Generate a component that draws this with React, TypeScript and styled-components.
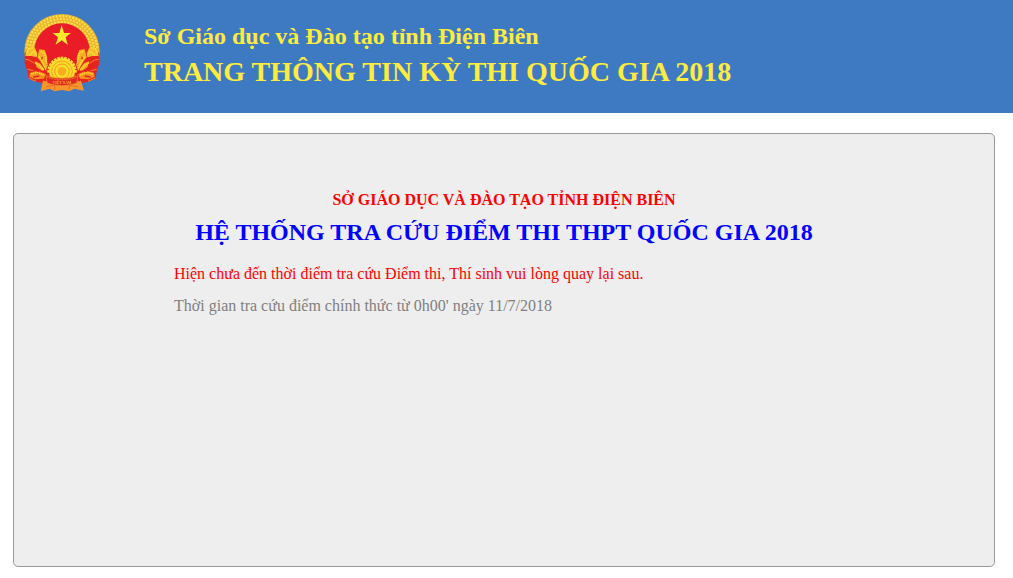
import React from "react";
import styled, { createGlobalStyle } from "styled-components";

const GlobalStyle = createGlobalStyle`
  body {
    margin: 0;
    background: #ffffff;
    font-family: "Liberation Serif", "Times New Roman", Times, serif;
  }
`;

const Header = styled.header`
  display: flex;
  align-items: flex-start;
  gap: 44px;
  min-height: 113px;
  box-sizing: border-box;
  padding: 14px 24px;
  background: #3e7ac2;
  color: #ffeb3b;
`;

const EmblemSvg = styled.svg`
  flex: none;
  width: 76px;
  height: 79px;
`;

const Titles = styled.div`
  padding-top: 4px;
`;

const Department = styled.p`
  margin: 0;
  font-size: 24px;
  line-height: 36px;
  font-weight: bold;
`;

const SiteTitle = styled.h1`
  margin: 0;
  font-size: 28px;
  line-height: 36px;
  font-weight: bold;
`;

const Panel = styled.main`
  box-sizing: border-box;
  min-height: calc(100vh - 144px);
  margin: 20px 18px 11px 13px;
  padding: 50px 20px;
  border: 1px solid #999999;
  border-radius: 5px;
  background: #eeeeee;
`;

const Content = styled.section`
  max-width: 660px;
  margin: 0 auto;
`;

const Agency = styled.p`
  margin: 0;
  text-align: center;
  color: #ff0000;
  font-size: 16px;
  line-height: 32px;
  font-weight: bold;
`;

const SystemTitle = styled.h2`
  margin: 0 0 10px;
  text-align: center;
  color: #0000ff;
  font-size: 24px;
  line-height: 32px;
  font-weight: bold;
`;

const Message = styled.p<{ $color: string }>`
  margin: 0;
  color: ${({ $color }) => $color};
  font-size: 16px;
  line-height: 32px;
`;

const teeth = Array.from({ length: 13 }, (_, i) => -180 + i * 15);

function Sheaf() {
  return (
    <g>
      <path d="M20 138 L28 120 L50 116 L82 124 L92 160 L92 206 L80 226 L56 222 L32 212 L28 190 L20 166 Z" fill="#e8241f" />
      <path d="M22 144 L26 120 L48 114 L58 136 L56 148 L40 144 Z" fill="#f3bd2c" />
      <path d="M64 124 L80 126 L88 148 L86 170 L96 188 L90 196 L78 178 L66 158 L58 148 Z" fill="#f5ae24" />
      <path d="M50 160 L66 166 L80 184 L72 188 L56 178 Z" fill="#f6a823" />
      <path d="M36 194 L58 188 L84 198 L78 212 L52 214 L34 206 Z" fill="#f3901f" />
      <g fill="none" stroke="#ffe733" strokeWidth="4" strokeDasharray="4 2">
        <path d="M26 136 L32 122 L48 119 M34 142 L48 130 L56 142" />
        <path d="M68 130 L80 136 L84 156 L92 186 M64 146 L74 162 L86 190" />
        <path d="M52 164 L64 172 L78 188 M40 198 L58 193 L80 202" />
      </g>
      <g fill="none" stroke="#e02320" strokeWidth="4">
        <path d="M22 152 L44 156 M24 164 L46 176 L62 192 M72 146 L72 154 M46 207 L64 204" />
      </g>
      <path d="M22 154 L34 156 L50 166 M28 184 L46 188 M32 210 L54 220" fill="none" stroke="#f28a24" strokeWidth="3" />
    </g>
  );
}

function Emblem() {
  return (
    <EmblemSvg viewBox="18 18 228 237" preserveAspectRatio="none" role="img" aria-label="Quốc huy Việt Nam">
      <ellipse cx="132" cy="130" rx="113" ry="112" fill="#e9b12d" />
      <g fill="none" stroke="#fbe04a">
        <circle cx="132" cy="130" r="106" strokeWidth="7" strokeDasharray="6 4" />
        <circle cx="132" cy="130" r="97" strokeWidth="6" strokeDasharray="6 4" />
        <circle cx="132" cy="130" r="88" strokeWidth="6" strokeDasharray="7 3" />
      </g>
      <ellipse cx="132" cy="130" rx="83" ry="84" fill="#ea1c27" />
      <path d="M70 190 H194 V226 H70 Z" fill="#ea2b22" />
      <Sheaf />
      <g transform="translate(264 0) scale(-1 1)">
        <Sheaf />
      </g>
      <path d="M131 52 L138 75 L158 75 L143 88 L149 110 L131 97 L113 110 L120 88 L104 75 L124 75 Z" fill="#ffef2d" />
      <path d="M131 52 L131 83 M158 75 L131 83 M149 110 L131 83 M113 110 L131 83 M104 75 L131 83" stroke="#f7c62b" strokeWidth="1" />
      <path d="M84 194 A48 48 0 0 1 180 194 L174 212 L90 212 Z" fill="#ea2420" />
      <g fill="#fddc32">
        {teeth.map((a) => (
          <rect key={a} x="36" y="-4" width="8" height="8" transform={`translate(132 190) rotate(${a})`} />
        ))}
      </g>
      <circle cx="132" cy="190" r="39" fill="#fddc2b" />
      <circle cx="132" cy="190" r="31" fill="none" stroke="#f3a51e" strokeWidth="3" />
      <circle cx="132" cy="190" r="22" fill="none" stroke="#f19a1c" strokeWidth="3" />
      <circle cx="132" cy="190" r="13" fill="#f7ae1f" />
      <path d="M75 218 L132 229 L189 218 L198 248 L169 242 L154 250 L132 246 L110 250 L95 242 L68 250 Z" fill="#f5952a" />
      <path d="M84 236 L110 232 L110 246 M180 236 L154 232 L154 246" fill="none" stroke="#ea6a20" strokeWidth="3" />
      <path d="M84 203 Q132 219 180 203 L176 226 Q132 240 88 226 Z" fill="#e02822" stroke="#f3922a" strokeWidth="2" />
      <path d="M88 208 Q132 222 176 208" fill="none" stroke="#f3952a" strokeWidth="3" strokeDasharray="3 2" />
      <text x="132" y="229" textAnchor="middle" fontSize="11" fontWeight="bold" fill="#ffb52a">VIỆT NAM</text>
    </EmblemSvg>
  );
}

export default function App() {
  return (
    <>
      <GlobalStyle />
      <Header>
        <Emblem />
        <Titles>
          <Department>Sở Giáo dục và Đào tạo tỉnh Điện Biên</Department>
          <SiteTitle>TRANG THÔNG TIN KỲ THI QUỐC GIA 2018</SiteTitle>
        </Titles>
      </Header>
      <Panel>
        <Content>
          <Agency>SỞ GIÁO DỤC VÀ ĐÀO TẠO TỈNH ĐIỆN BIÊN</Agency>
          <SystemTitle>HỆ THỐNG TRA CỨU ĐIỂM THI THPT QUỐC GIA 2018</SystemTitle>
          <Message $color="#ff0000">Hiện chưa đến thời điểm tra cứu Điểm thi, Thí sinh vui lòng quay lại sau.</Message>
          <Message $color="#808080">Thời gian tra cứu điểm chính thức từ 0h00' ngày 11/7/2018</Message>
        </Content>
      </Panel>
    </>
  );
}
